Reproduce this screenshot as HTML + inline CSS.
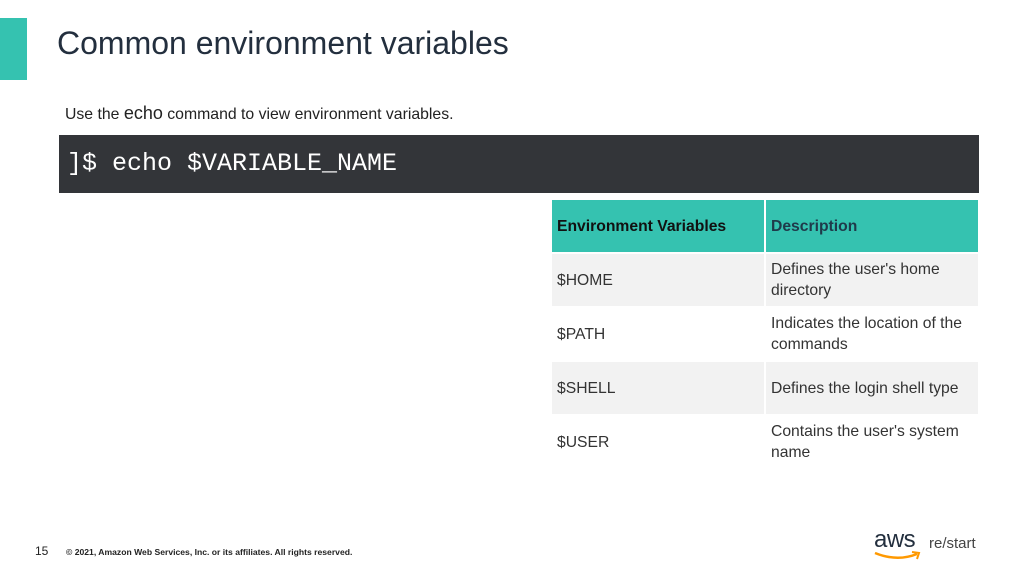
<!DOCTYPE html>
<html><head><meta charset="utf-8"><style>
*{margin:0;padding:0;box-sizing:border-box}
body{width:1032px;height:580px;background:#fff;position:relative;overflow:hidden;font-family:"Liberation Sans",sans-serif;color:#232f3e}
.a{position:absolute}
table{border-collapse:separate;border-spacing:2px 2px}
td{font-size:15.7px;line-height:21px;color:#333;padding:0 5px;vertical-align:middle}
</style></head><body>
<div class="a" style="left:0;top:18px;width:27px;height:62px;background:#35c2b0"></div>
<div class="a" style="left:57px;top:25px;font-size:32px;color:#232f3e">Common environment variables</div>
<div class="a" style="left:65px;top:103px;font-size:15.8px;color:#222">Use the <span style="font-size:18px">echo</span> command to view environment variables.</div>
<div class="a" style="left:59px;top:135px;width:920px;height:58px;background:#333539"></div>
<div class="a" style="left:67px;top:149px;font-family:'Liberation Mono',monospace;font-size:25px;color:#fff">]$ echo $VARIABLE_NAME</div>
<table class="a" style="left:550px;top:198px;width:430px">
<tr style="height:52px;background:#35c2b0"><td style="width:212px;font-weight:bold;color:#111;background:#35c2b0">Environment Variables</td><td style="font-weight:bold;color:#1f3a4a;background:#35c2b0">Description</td></tr>
<tr style="height:52px"><td style="background:#f2f2f2">$HOME</td><td style="background:#f2f2f2">Defines the user's home directory</td></tr>
<tr style="height:52px"><td>$PATH</td><td>Indicates the location of the commands</td></tr>
<tr style="height:52px"><td style="background:#f2f2f2">$SHELL</td><td style="background:#f2f2f2">Defines the login shell type</td></tr>
<tr style="height:52px"><td>$USER</td><td>Contains the user's system name</td></tr>
</table>
<div class="a" style="left:35px;top:544px;font-size:12px;color:#222">15</div>
<div class="a" style="left:66px;top:547px;font-size:8.6px;font-weight:bold;color:#222">© 2021, Amazon Web Services, Inc. or its affiliates. All rights reserved.</div>
<div class="a" style="left:874px;top:526px;font-size:24px;color:#232f3e;letter-spacing:-0.5px">aws</div>
<svg class="a" style="left:873px;top:550px" width="50" height="14"><path d="M2 3 Q24 12 44 4" stroke="#f90" stroke-width="2.5" fill="none"/><path d="M39 2 L46 3 L44 9" stroke="#f90" stroke-width="2" fill="none"/></svg>
<div class="a" style="left:929px;top:535px;font-size:15px;color:#444">re/start</div>
</body></html>
